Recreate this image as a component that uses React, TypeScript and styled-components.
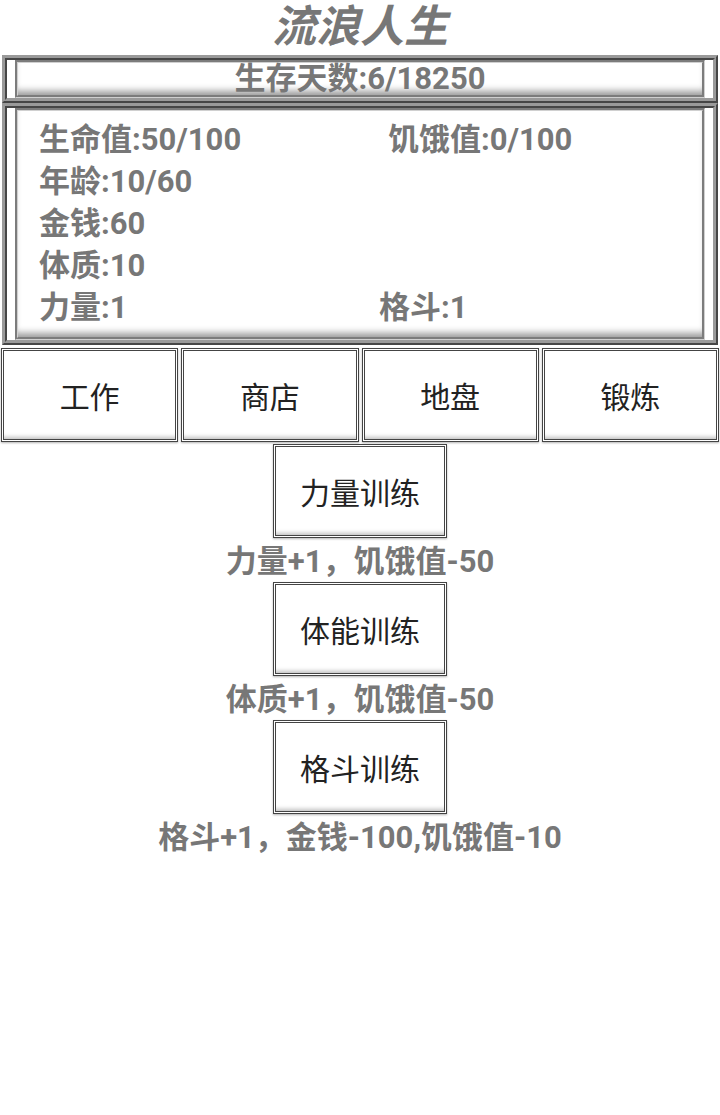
import { createGlobalStyle } from "styled-components";
import styled from "styled-components";

const GlobalStyle = createGlobalStyle`
  body {
    margin: 0;
    background: #fff;
    font-family: Roboto, "Noto Sans CJK SC", sans-serif;
  }
`;

const Page = styled.div`
  width: 720px;
  display: flex;
  flex-direction: column;
  align-items: stretch;
`;

const Title = styled.h1`
  margin: 0;
  height: 55px;
  line-height: 55px;
  text-align: center;
  font-size: 44px;
  font-style: italic;
  font-weight: bold;
  color: #777;
`;

const Frame = styled.div`
  margin: 0 2px;
  border: 5px ridge #9a9a9a;
  padding: 0 8px;
`;

const FrameInner = styled.div`
  border: 3px groove #d0d0d0;
  box-shadow: inset 0 -8px 7px -4px rgba(0, 0, 0, 0.4);
`;

const DayText = styled.div`
  height: 32px;
  line-height: 32px;
  text-align: center;
  font-size: 31px;
  font-weight: bold;
  color: #777;
`;

const StatGrid = styled.div`
  display: grid;
  grid-template-columns: 340px 1fr;
  grid-auto-rows: 42px;
  padding: 8px 0 8px 21px;
`;

const Stat = styled.div<{ $shift?: number }>`
  font-size: 31px;
  font-weight: bold;
  color: #777;
  line-height: 42px;
  white-space: nowrap;
  padding-left: ${(p) => p.$shift ?? 0}px;
`;

const NavRow = styled.div`
  display: grid;
  grid-template-columns: repeat(4, 1fr);
  gap: 3px;
  margin: 3px 1px 0;
`;

const Button = styled.button`
  box-sizing: border-box;
  height: 94px;
  background: #fff;
  border: 3px double #444;
  box-shadow: inset 0 -6px 4px -4px rgba(0, 0, 0, 0.25), 0 1px 2px rgba(0, 0, 0, 0.3);
  font-family: Roboto, "Noto Sans CJK SC", sans-serif;
  font-size: 30px;
  color: #222;
  padding: 0;
`;

const Training = styled.div`
  display: flex;
  flex-direction: column;
  align-items: center;
  margin-top: 2px;
`;

const TrainButton = styled(Button)`
  width: 174px;
`;

const Desc = styled.div`
  box-sizing: border-box;
  height: 44px;
  padding-top: 2px;
  line-height: 44px;
  font-size: 31px;
  font-weight: bold;
  color: #777;
  white-space: nowrap;
  overflow: visible;
`;

const trainings = [
  { name: "力量训练", desc: "力量+1，饥饿值-50" },
  { name: "体能训练", desc: "体质+1，饥饿值-50" },
  { name: "格斗训练", desc: "格斗+1，金钱-100,饥饿值-10" },
];

export default function App() {
  return (
    <Page>
      <GlobalStyle />
      <Title>流浪人生</Title>
      <Frame>
        <FrameInner>
          <DayText>生存天数:6/18250</DayText>
        </FrameInner>
      </Frame>
      <Frame>
        <FrameInner>
          <StatGrid>
            <Stat>生命值:50/100</Stat>
            <Stat $shift={9}>饥饿值:0/100</Stat>
            <Stat>年龄:10/60</Stat>
            <Stat />
            <Stat>金钱:60</Stat>
            <Stat />
            <Stat>体质:10</Stat>
            <Stat />
            <Stat>力量:1</Stat>
            <Stat>格斗:1</Stat>
          </StatGrid>
        </FrameInner>
      </Frame>
      <NavRow>
        <Button>工作</Button>
        <Button>商店</Button>
        <Button>地盘</Button>
        <Button>锻炼</Button>
      </NavRow>
      <Training>
        {trainings.map((t) => (
          <div key={t.name} style={{ display: "contents" }}>
            <TrainButton>{t.name}</TrainButton>
            <Desc>{t.desc}</Desc>
          </div>
        ))}
      </Training>
    </Page>
  );
}
